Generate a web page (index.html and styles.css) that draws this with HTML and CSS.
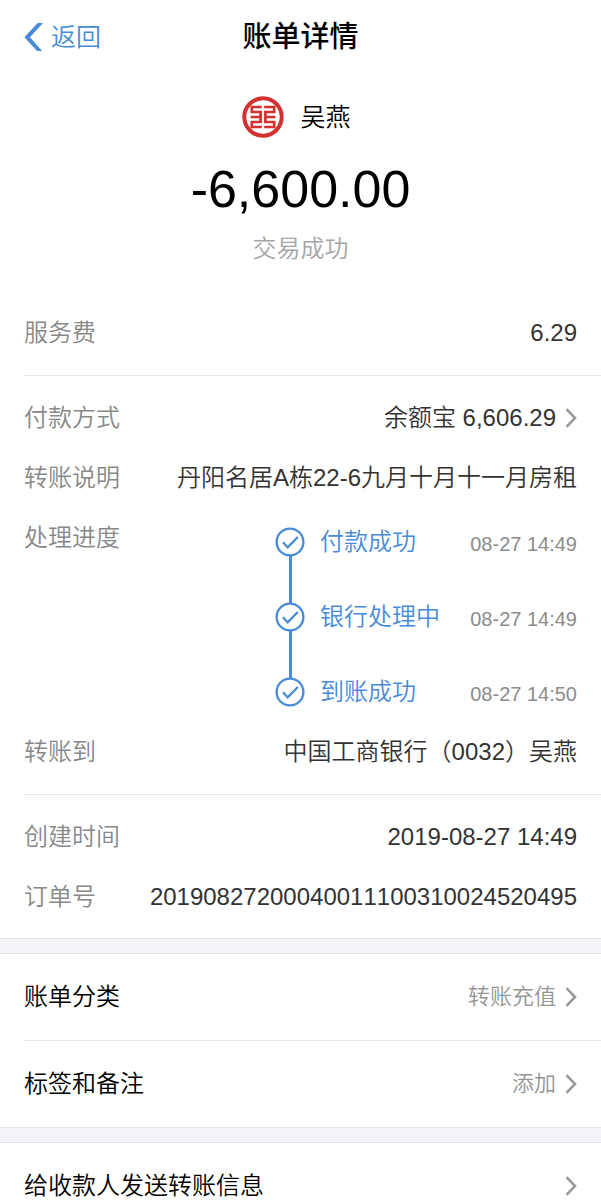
FILE: index.html
```html
<!DOCTYPE html>
<html lang="zh-CN">
<head>
  <meta charset="UTF-8">
  <meta name="viewport" content="width=device-width, initial-scale=1.0">
  <title>账单详情</title>
  <link rel="stylesheet" href="styles.css">
</head>
<body>
  <svg class="sprite" aria-hidden="true">
    <symbol id="chevron" viewBox="0 0 12 20">
      <path d="M1.5 1.2 10 10 1.5 18.8" fill="none" stroke="currentColor" stroke-width="2.6"/>
    </symbol>
    <symbol id="check" viewBox="0 0 30 30">
      <circle cx="15" cy="15" r="13.4" fill="none" stroke="currentColor" stroke-width="2.3"/>
      <path d="M8 15.2 12.7 20.4 22.8 10" fill="none" stroke="currentColor" stroke-width="2.3"/>
    </symbol>
  </svg>

  <header class="navbar">
    <a class="back" href="#">
      <svg class="back-icon" viewBox="0 0 20 28" aria-hidden="true">
        <path d="M13.6 0H19L6 14.2 18.2 28H13L0.4 14.2Z" fill="currentColor"/>
      </svg>
      返回
    </a>
    <h1 class="title">账单详情</h1>
  </header>

  <main>
    <section class="summary">
      <div class="payee">
        <svg class="bank-logo" viewBox="0 0 42 42" aria-hidden="true">
          <circle cx="21" cy="21" r="18.7" fill="none" stroke="#d2322f" stroke-width="4"/>
          <path d="M19.8 11H9.8V16H18.6V26H9.8V31H19.8M8.6 21H18.6M22.2 11H32.2V16H23.4V26H32.2V31H22.2M33.4 21H23.4" fill="none" stroke="#d2322f" stroke-width="2.7"/>
        </svg>
        <span>吴燕</span>
      </div>
      <p class="amount">-6,600.00</p>
      <p class="status">交易成功</p>
    </section>

    <dl class="group">
      <div class="row">
        <dt>服务费</dt>
        <dd>6.29</dd>
      </div>
    </dl>

    <dl class="group">
      <div class="row">
        <dt>付款方式</dt>
        <dd>
          <a class="more" href="#">余额宝 6,606.29 <svg class="chevron" aria-hidden="true"><use href="#chevron"/></svg></a>
        </dd>
      </div>
      <div class="row">
        <dt>转账说明</dt>
        <dd>丹阳名居A栋22-6九月十月十一月房租</dd>
      </div>
      <div class="row">
        <dt>处理进度</dt>
        <dd class="progress">
          <ol class="steps">
            <li class="step">
              <svg class="check" aria-hidden="true"><use href="#check"/></svg>
              <span class="step-name">付款成功</span>
              <time class="step-time">08-27 14:49</time>
            </li>
            <li class="step">
              <svg class="check" aria-hidden="true"><use href="#check"/></svg>
              <span class="step-name">银行处理中</span>
              <time class="step-time">08-27 14:49</time>
            </li>
            <li class="step">
              <svg class="check" aria-hidden="true"><use href="#check"/></svg>
              <span class="step-name">到账成功</span>
              <time class="step-time">08-27 14:50</time>
            </li>
          </ol>
        </dd>
      </div>
      <div class="row">
        <dt>转账到</dt>
        <dd>中国工商银行（0032）吴燕</dd>
      </div>
    </dl>

    <dl class="group">
      <div class="row">
        <dt>创建时间</dt>
        <dd>2019-08-27 14:49</dd>
      </div>
      <div class="row">
        <dt>订单号</dt>
        <dd>20190827200040011100310024520495</dd>
      </div>
    </dl>

    <nav class="menu">
      <a class="menu-item" href="#">
        <span>账单分类</span>
        <span class="more hint">转账充值 <svg class="chevron" aria-hidden="true"><use href="#chevron"/></svg></span>
      </a>
      <a class="menu-item" href="#">
        <span>标签和备注</span>
        <span class="more hint">添加 <svg class="chevron" aria-hidden="true"><use href="#chevron"/></svg></span>
      </a>
    </nav>

    <nav class="menu">
      <a class="menu-item" href="#">
        <span>给收款人发送转账信息</span>
        <svg class="chevron" aria-hidden="true"><use href="#chevron"/></svg>
      </a>
    </nav>
  </main>
</body>
</html>
```

FILE: styles.css
```css
* {
  box-sizing: border-box;
}

body {
  margin: 0;
  background: #fff;
  color: #000;
  font-family: "Liberation Sans", "Noto Sans CJK SC", sans-serif;
  font-size: 24px;
  font-weight: 350;
  font-kerning: none;
  line-height: 36px;
}

h1, p, dl, dd, ol {
  margin: 0;
  padding: 0;
}

ol {
  list-style: none;
}

a {
  color: inherit;
  text-decoration: none;
}

svg {
  display: block;
  flex: none;
}

.sprite {
  position: absolute;
  width: 0;
  height: 0;
}

/* Top bar */
.navbar {
  display: grid;
  grid-template-columns: 1fr auto 1fr;
  align-items: center;
  padding: 19px 24px 18px;
}

.back {
  display: flex;
  align-items: center;
  gap: 7px;
  color: #478bd9;
  font-size: 25px;
}

.back-icon {
  width: 20px;
  height: 28px;
}

.title {
  font-size: 29px;
  font-weight: 500;
}

/* Payee and amount */
.summary {
  padding: 24px;
  text-align: center;
}

.payee {
  display: flex;
  justify-content: center;
  align-items: center;
  gap: 16px;
  height: 40px;
  padding-right: 8px;
  font-size: 25px;
}

.bank-logo {
  width: 42px;
  height: 42px;
}

.amount {
  margin-top: 20px;
  font-size: 52px;
  line-height: 64px;
}

.status {
  margin-top: 10px;
  color: #a5a5a5;
}

/* Detail rows */
.group {
  display: flex;
  flex-direction: column;
  gap: 24px;
  margin-left: 24px;
  padding: 24px 24px 24px 0;
  color: #333;
}

.group + .group {
  border-top: 1px solid #e8e8e8;
}

.group:last-of-type {
  padding-bottom: 23px;
}

.row {
  display: flex;
  justify-content: space-between;
}

.row dt {
  color: #888;
}

.more {
  display: flex;
  align-items: center;
  gap: 9px;
}

.chevron {
  width: 12px;
  height: 20px;
  color: #999;
}

/* Progress steps */
.progress {
  width: 302px;
  padding-top: 4px;
}

.step {
  position: relative;
  display: flex;
  align-items: center;
  height: 36px;
}

.step + .step {
  margin-top: 39px;
}

/* line up to the previous step */
.step + .step::before {
  content: "";
  position: absolute;
  left: 14px;
  bottom: 32px;
  width: 3px;
  height: 47px;
  background: #478bd9;
}

.check {
  width: 30px;
  height: 30px;
  color: #478bd9;
}

.step-name {
  margin-left: 15px;
  color: #478bd9;
}

.step-time {
  margin-left: auto;
  padding-top: 4px;
  color: #8c8c8c;
  font-size: 20px;
}

/* Menu */
.menu {
  border-top: 1px solid #e4e4e7;
}

.menu::before {
  content: "";
  display: block;
  height: 14px;
  border-bottom: 1px solid #e4e4e7;
  background: #f3f3f8;
}

.menu-item {
  display: flex;
  justify-content: space-between;
  align-items: center;
  margin-left: 24px;
  padding: 25px 24px 25px 0;
}

.menu-item + .menu-item {
  border-top: 1px solid #e8e8e8;
}

.hint {
  color: #959595;
  font-size: 22px;
}
```
